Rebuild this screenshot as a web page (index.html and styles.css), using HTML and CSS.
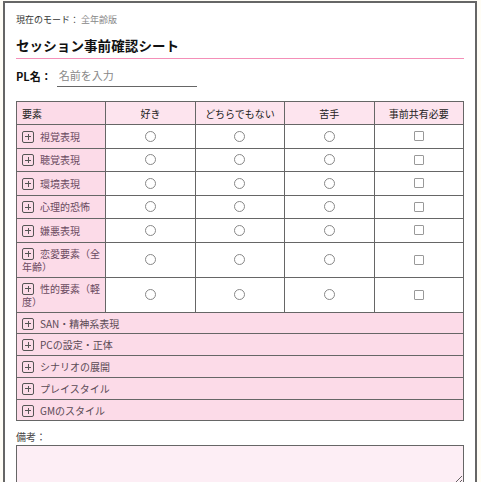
FILE: index.html
```html
<!DOCTYPE html>
<html lang="ja">
<head>
    <meta charset="UTF-8">
    <meta name="viewport" content="width=device-width, initial-scale=1.0">
    <title>セッション事前確認シート</title>
    <link rel="stylesheet" href="styles.css">
</head>
<body>
    <div class="sheet">
        <div class="mode">現在のモード： <span class="mode-value">全年齢版</span></div>

        <h1 class="title">セッション事前確認シート</h1>

        <div class="pl-row">
            <label for="plName">PL名：</label>
            <input type="text" id="plName" placeholder="名前を入力">
        </div>

        <table class="check-table">
            <thead>
                <tr>
                    <th class="col-item">要素</th>
                    <th>好き</th>
                    <th>どちらでもない</th>
                    <th>苦手</th>
                    <th>事前共有必要</th>
                </tr>
            </thead>
            <tbody>
                <tr class="item">
                    <td class="item-name"><span class="toggle"></span>視覚表現</td>
                    <td><input type="radio" name="r1"></td>
                    <td><input type="radio" name="r1"></td>
                    <td><input type="radio" name="r1"></td>
                    <td><input type="checkbox"></td>
                </tr>
                <tr class="item">
                    <td class="item-name"><span class="toggle"></span>聴覚表現</td>
                    <td><input type="radio" name="r2"></td>
                    <td><input type="radio" name="r2"></td>
                    <td><input type="radio" name="r2"></td>
                    <td><input type="checkbox"></td>
                </tr>
                <tr class="item">
                    <td class="item-name"><span class="toggle"></span>環境表現</td>
                    <td><input type="radio" name="r3"></td>
                    <td><input type="radio" name="r3"></td>
                    <td><input type="radio" name="r3"></td>
                    <td><input type="checkbox"></td>
                </tr>
                <tr class="item">
                    <td class="item-name"><span class="toggle"></span>心理的恐怖</td>
                    <td><input type="radio" name="r4"></td>
                    <td><input type="radio" name="r4"></td>
                    <td><input type="radio" name="r4"></td>
                    <td><input type="checkbox"></td>
                </tr>
                <tr class="item">
                    <td class="item-name"><span class="toggle"></span>嫌悪表現</td>
                    <td><input type="radio" name="r5"></td>
                    <td><input type="radio" name="r5"></td>
                    <td><input type="radio" name="r5"></td>
                    <td><input type="checkbox"></td>
                </tr>
                <tr class="item">
                    <td class="item-name"><span class="toggle"></span>恋愛要素（全年齢）</td>
                    <td><input type="radio" name="r6"></td>
                    <td><input type="radio" name="r6"></td>
                    <td><input type="radio" name="r6"></td>
                    <td><input type="checkbox"></td>
                </tr>
                <tr class="item">
                    <td class="item-name"><span class="toggle"></span>性的要素（軽度）</td>
                    <td><input type="radio" name="r7"></td>
                    <td><input type="radio" name="r7"></td>
                    <td><input type="radio" name="r7"></td>
                    <td><input type="checkbox"></td>
                </tr>

                <!-- Groups -->
                <tr class="group"><td colspan="5"><span class="toggle"></span>SAN・精神系表現</td></tr>
                <tr class="group"><td colspan="5"><span class="toggle"></span>PCの設定・正体</td></tr>
                <tr class="group"><td colspan="5"><span class="toggle"></span>シナリオの展開</td></tr>
                <tr class="group"><td colspan="5"><span class="toggle"></span>プレイスタイル</td></tr>
                <tr class="group"><td colspan="5"><span class="toggle"></span>GMのスタイル</td></tr>
            </tbody>
        </table>

        <div class="notes">
            <label for="notes">備考：</label>
            <textarea id="notes"></textarea>
        </div>
    </div>
</body>
</html>
```

FILE: styles.css
```css
/* General Reset */
* {
    margin: 0;
    padding: 0;
    box-sizing: border-box;
    font-family: "Noto Sans CJK JP", "Noto Sans", sans-serif;
}

body {
    background-color: #fffdf6;
    color: #333;
    padding: 1px 3px 0;
}

.sheet {
    width: 474px;
    background: white;
    border: 2px solid #666;
    border-bottom: none;
    padding: 10px 11px 0;
}

.mode {
    font-size: 9px;
    line-height: 13px;
    color: #333;
}

.mode-value {
    color: #888;
}

.title {
    margin-top: 10px;
    padding-bottom: 4px;
    font-size: 13.5px;
    line-height: 18px;
    color: #111;
    letter-spacing: 0.1px;
    border-bottom: 1px solid #f48fb8;
}

/* PL name */
.pl-row {
    display: flex;
    align-items: center;
    margin-top: 5px;
}

.pl-row label {
    font-size: 11px;
    font-weight: bold;
    color: #111;
    margin-right: 5px;
}

.pl-row input {
    width: 140px;
    height: 23px;
    padding: 0 2px;
    border: none;
    border-bottom: 1px solid #666;
    font-size: 11px;
    outline: none;
}

.pl-row input::placeholder {
    color: #888;
}

/* Check table */
.check-table {
    width: 100%;
    margin-top: 14px;
    border-collapse: collapse;
    table-layout: fixed;
    font-size: 10px;
    line-height: 13px;
}

.check-table th,
.check-table td {
    border: 1px solid #666;
    padding: 4px 5px;
    text-align: center;
    vertical-align: middle;
}

.check-table th {
    background-color: #fde4ee;
    font-weight: normal;
    color: #222;
    padding: 5px 5px 4px;
}

.check-table th.col-item {
    text-align: left;
    background-color: #fcdbe8;
}

.item {
    height: 23.5px;
}

.check-table .item-name {
    background-color: #fcdbe8;
    color: #6a4a60;
    text-align: left;
    padding: 4px 2px 4px 5px;
}

.group td {
    background-color: #fcdbe8;
    color: #5a4a55;
    text-align: left;
    padding: 4px 5px 3.8px;
}

.toggle {
    display: inline-block;
    position: relative;
    width: 12px;
    height: 12px;
    margin-right: 6px;
    border: 1px solid #555;
    border-radius: 2px;
    vertical-align: -2px;
}

.toggle::before,
.toggle::after {
    content: "";
    position: absolute;
    background: #555;
}

.toggle::before {
    left: 2px;
    right: 2px;
    top: 4.5px;
    height: 1px;
}

.toggle::after {
    top: 2px;
    bottom: 2px;
    left: 4.5px;
    width: 1px;
}

.check-table input {
    appearance: none;
    display: block;
    margin: 0 auto;
    width: 11px;
    height: 11px;
    border: 1px solid #888;
    background: white;
}

.check-table input[type="radio"] {
    border-radius: 50%;
}

.check-table input[type="checkbox"] {
    width: 10px;
    height: 10px;
    border-color: #999;
    border-radius: 1px;
}

/* Notes */
.notes {
    margin-top: 9px;
}

.notes label {
    display: block;
    font-size: 10px;
    line-height: 13px;
    color: #444;
    margin-bottom: 2px;
}

.notes textarea {
    display: block;
    width: 100%;
    height: 40px;
    border: 1px solid #666;
    background-color: #fdeef5;
}
```
